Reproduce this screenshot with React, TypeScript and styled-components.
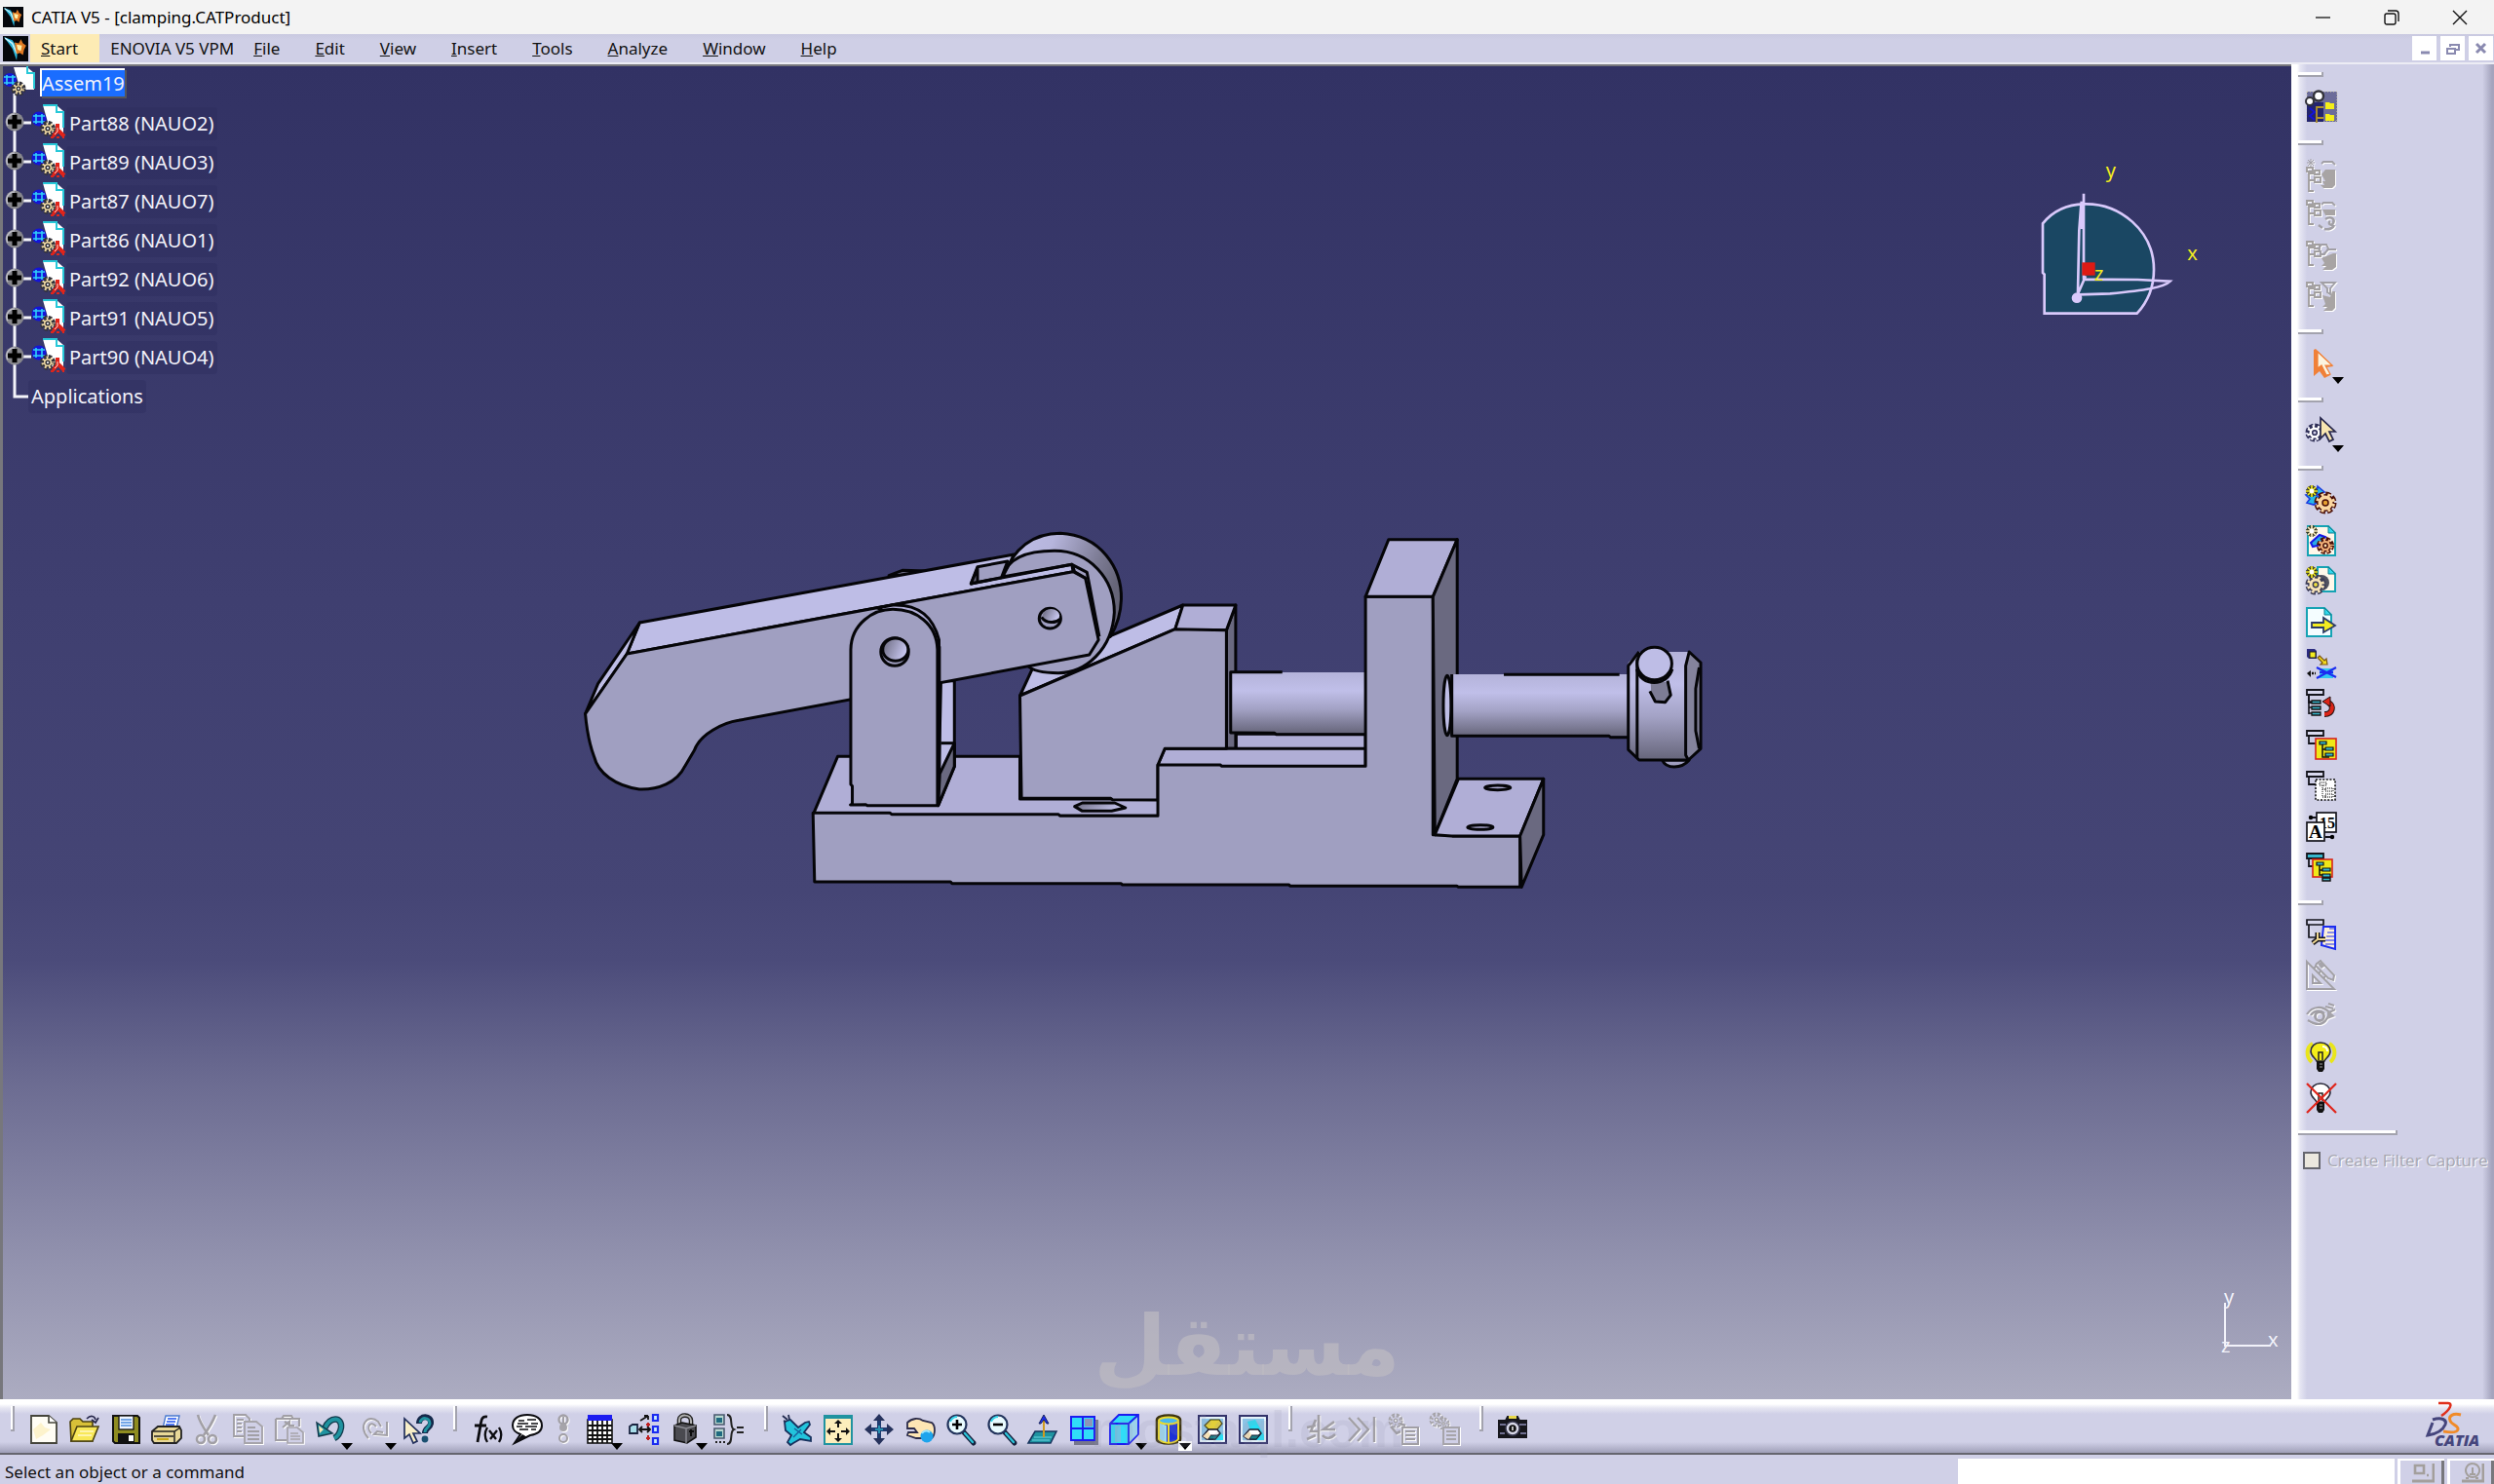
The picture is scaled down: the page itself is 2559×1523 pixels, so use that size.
import React from 'react';
import styled, { createGlobalStyle } from 'styled-components';

const INK = '#26264a';
const LILAC = '#d0d0e7';
const UI_FONT = '"Noto Sans", "Open Sans", sans-serif';

const GlobalStyle = createGlobalStyle`
  * { box-sizing: border-box; }
  body { margin: 0; background: ${LILAC}; font-family: ${UI_FONT}; color: #111; }
  button { font: inherit; color: inherit; border: 0; padding: 0; background: none; cursor: default; }
  svg { display: block; }
`;

/* ---------- window frame ---------- */

const Window = styled.div`
  position: relative;
  display: flex;
  flex-direction: column;
  height: 100vh;
  overflow: hidden;
`;

const TitleBar = styled.header`
  display: flex;
  align-items: center;
  height: 35px;
  padding-left: 3px;
  gap: 8px;
  background: #f3f3f3;
`;

const Title = styled.h1`
  flex: 1;
  margin: 0;
  font-size: 17px;
  line-height: 24px;
  font-weight: 400;
  color: #000;
`;

const FrameButtons = styled.div`
  display: flex;
`;

const FrameButton = styled.button`
  display: grid;
  place-items: center;
  width: 70px;
  height: 35px;
`;

const MenuBar = styled.nav`
  display: flex;
  align-items: stretch;
  height: 29px;
  background: linear-gradient(#c9c9e0, #cfcfe6 6px);
`;

const MenuIcon = styled.span`
  display: grid;
  place-items: center;
  width: 31px;
`;

const MenuItem = styled.button<{ $kind?: 'start' | 'wide' }>`
  padding: ${p => (p.$kind === 'start' ? '0 22px 0 11px' : p.$kind === 'wide' ? '0 2px 0 11px' : '0 18px')};
  background: ${p => (p.$kind === 'start' ? '#fdebb4' : 'none')};
  font-size: 17px;
  line-height: 28px;
  &::first-letter { text-decoration: ${p => (p.$kind === 'wide' ? 'none' : 'underline')}; }
`;

const Spacer = styled.div`
  flex: 1;
`;

const DocButtons = styled.div`
  display: flex;
  align-items: center;
  gap: 4px;
  padding-right: 1px;
`;

const DocButton = styled.button`
  display: grid;
  place-items: center;
  width: 25px;
  height: 25px;
  background: #fff;
`;

const Workspace = styled.div`
  display: flex;
  flex: 1;
  min-height: 0;
  border-top: 2px solid #ececf4;
`;

/* ---------- 3D view ---------- */

const Viewport = styled.main`
  position: relative;
  flex: 1;
  overflow: hidden;
  border-top: 2px solid #77777c;
  border-left: 3px solid #77777c;
  background: linear-gradient(#323264 0%, #3f3f70 40%, #454575 62%, #4b4b7a 67%, #6b6b91 76%, #9393af 90%, #acacc1 100%);
`;

const ModelView = styled.div`
  position: absolute;
  left: 577px;
  top: 452px;
`;

const CompassView = styled.div`
  position: absolute;
  right: 51px;
  top: 72px;
`;

const AxisView = styled.div`
  position: absolute;
  right: 1px;
  bottom: 26px;
`;

const Tree = styled.ul`
  list-style: none;
  margin: 0;
  padding: 0;
  width: 300px;
`;

const TreeRow = styled.li<{ $root?: boolean }>`
  display: flex;
  height: ${p => (p.$root ? 39 : 40)}px;
  align-items: flex-start;
`;

const TreeLabel = styled.button`
  height: 34px;
  margin-top: 3px;
  padding: 0 3px;
  border-radius: 4px;
  background: rgba(42, 42, 92, 0.35);
  color: #f2f2fa;
  font-size: 20px;
  line-height: 34px;
  white-space: nowrap;
`;

const RootLabel = styled.button`
  height: 29px;
  margin: 2px 0 0 4px;
  border: solid #fff;
  border-width: 2px 0 0 2px;
  box-shadow: 2px 2px 0 #55555a;
  background: #1a6dff;
  color: #f2f2fa;
  font-size: 20px;
  line-height: 28px;
`;

/* ---------- tool strips ---------- */

const Strip = styled.aside`
  width: 208px;
  padding: 8px 0 0 7px;
  background: linear-gradient(90deg, #fff 0 6px, #e6e6f3 9px, ${LILAC} 16px, ${LILAC} 196px, #a4a4bd 206px);
`;

const StripGroup = styled.div<{ $single?: boolean }>`
  min-height: ${p => (p.$single ? 70 : 0)}px;
  padding-bottom: 12px;
`;

const StripRule = styled.div<{ $long?: boolean }>`
  width: ${p => (p.$long ? 102 : 26)}px;
  height: 5px;
  margin-bottom: 9px;
  border: solid #a3a3ae;
  border-width: 0 2px 2px 0;
  background: #fff;
`;

const ToolButton = styled.button<{ $width?: number; $off?: boolean }>`
  position: relative;
  display: block;
  width: ${p => p.$width ?? 42}px;
  height: 42px;
  padding: 5px 0 5px ${p => (p.$width === 33 ? 0 : 5)}px;
  & > svg { filter: ${p => (p.$off ? 'drop-shadow(1px 1px 0 #fff)' : 'none')}; }
`;

const StripTool = styled(ToolButton)`
  margin-left: 3px;
`;

const DropArrow = styled.span<{ $lit?: boolean }>`
  position: absolute;
  left: 31px;
  top: 33px;
  display: grid;
  place-items: center;
  width: 14px;
  height: 10px;
  background: ${p => (p.$lit ? '#fff' : 'none')};
  &::after {
    content: '';
    border: solid transparent;
    border-width: 7px 6px 0;
    border-top-color: #000;
  }
`;

const CaptureRow = styled.label`
  display: flex;
  align-items: center;
  gap: 7px;
  margin-top: 14px;
  padding-left: 5px;
  color: #a6a6b0;
  text-shadow: 1px 1px 0 #fff;
  font-family: "Open Sans", sans-serif;
  font-size: 17px;
  line-height: 24px;
  white-space: nowrap;
`;

const Check = styled.input`
  appearance: none;
  width: 18px;
  height: 18px;
  margin: 0;
  border: 2px solid #66666f;
  background: #ebe7de;
`;

const BottomBar = styled.div`
  display: flex;
  align-items: flex-start;
  height: 57px;
  padding: 7px 8px 0 11px;
  border-bottom: 2px solid #66666f;
  background: linear-gradient(#fff 0 5px, #e6e6f2 9px, ${LILAC} 15px, ${LILAC} 44px, #9f9fb8 55px);
`;

const BarGroup = styled.div`
  display: flex;
  align-items: flex-start;
  padding-right: 15px;
`;

const Grip = styled.div`
  width: 4px;
  height: 26px;
  margin-right: 9px;
  border: solid #a3a3ae;
  border-width: 0 2px 2px 0;
  background: #fff;
`;

const BarTools = styled.div`
  display: flex;
  padding-top: 3px;
`;

const Brand = styled.div`
  margin-top: -5px;
`;

const StatusBar = styled.footer`
  display: flex;
  height: 30px;
  padding: 4px 0 0 5px;
  background: ${LILAC};
`;

const Message = styled.p`
  flex: 1;
  margin: 0;
  font-size: 17px;
  line-height: 28px;
`;

const CommandInput = styled.input`
  width: 448px;
  border: 0;
  padding: 0 6px;
  background: #fff;
  font: 400 17px ${UI_FONT};
`;

const StatusButton = styled.button`
  display: grid;
  place-items: center;
  width: 48px;
  margin-left: 3px;
  border: solid #fff;
  border-width: 2px 0 0 3px;
  box-shadow: inset -3px 0 0 #77777c;
`;

const Watermark = styled.div`
  position: absolute;
  left: 50%;
  bottom: 32px;
  transform: translateX(-50%);
  display: flex;
  flex-direction: column;
  align-items: center;
  pointer-events: none;
`;

const MarkArabic = styled.span`
  margin-bottom: 12px;
  font: 700 86px/100px "DejaVu Sans", sans-serif;
  color: rgba(190, 187, 194, 0.7);
`;

const MarkLatin = styled.span`
  font: 700 52px/48px "Liberation Sans", sans-serif;
  color: rgba(150, 150, 175, 0.16);
`;

/* ---------- icon pieces ---------- */

type GearProps = { x: number; y: number; r: number; fill?: string; line?: string; hub?: string };

const Gear = ({ x, y, r, fill = '#f8e0b0', line = '#2b2b2b', hub = '#fff' }: GearProps) => {
  const t = (2 * Math.PI * r) / 16;
  return (
    <g>
      <circle cx={x} cy={y} r={r} fill={line} stroke={line} strokeWidth={5} strokeDasharray={`${t * 1.4} ${t * 0.6}`} />
      <circle cx={x} cy={y} r={r - 1.5} fill={fill} />
      <circle cx={x} cy={y} r={r - 0.5} fill="none" stroke={fill} strokeWidth={3} strokeDasharray={`${t * 0.8} ${t * 1.14}`} strokeDashoffset={-t * 0.3} />
      <circle cx={x} cy={y} r={r / 3} fill={hub} stroke={line} strokeWidth={1.5} />
    </g>
  );
};

const Sun = ({ x, y, pale }: { x: number; y: number; pale?: boolean }) => {
  const d = `M${x} ${y - 6}v12M${x - 6} ${y}h12M${x - 4} ${y - 4}l8 8M${x + 4} ${y - 4}l-8 8`;
  return (
    <g>
      <path d={d} stroke="#33331a" strokeWidth={3.4} />
      <path d={d} stroke={pale ? '#fdeec0' : '#f4ec20'} strokeWidth={1.7} />
      <circle cx={x} cy={y} r={2.4} fill="#fff" />
    </g>
  );
};

const Sheet = ({ x = 2, y = 1, w = 28, h = 30, fill = '#fff8ea' }) => (
  <g>
    <path d={`M${x} ${y}h${w - 7}l7 7v${h - 7}h${-w}z`} fill={fill} stroke="#16a3b4" strokeWidth={2} />
    <path d={`M${x + w - 7} ${y}v7h7z`} fill="#30d8ec" stroke="#0d7f90" strokeWidth={1} />
  </g>
);

const Head = ({ fill = '#d9d9ee' }: { fill?: string }) => (
  <g fill="none" stroke="#15151c" strokeWidth={1.8}>
    <path d="M3 6v8h8" />
    <path d="M1 1h17v5H1z" fill={fill} />
  </g>
);

const GrayTree = ({ top = 6 }: { top?: number }) => (
  <path
    d={`M1 ${top}h6v4H1zM3 ${top + 4}v20h5M3 ${top + 6}h5M9 ${top + 3}h5v4H9zM3 ${top + 13}h5M9 ${top + 10}h6v5H9z`}
    fill="none"
    stroke="#a29f9f"
    strokeWidth={1.9}
  />
);

const Cubes = ({ gold }: { gold?: boolean }) => (
  <g>
    <rect x={2} y={2} width={28} height={28} fill="#8cc4e6" stroke="#33336a" strokeWidth={2} />
    <rect x={4} y={4} width={24} height={24} fill="none" stroke="#fff" strokeWidth={1.5} />
    <path d={gold ? 'M20 14l7 8v5h-9z' : 'M10 8l8-2 9 16v5H16z'} fill="#25dff5" />
    {gold && <path d="M8 12l6-6h9l3 4-5 6h-9z" fill="#e2cf3a" stroke="#3f3d10" strokeWidth={1.2} />}
    <path d="M6 23l6-7h9l3 4-5 6H10z" fill="#fff" stroke="#1b1b2c" strokeWidth={1.4} />
    <path d="M14 22h7l3-2-5 6h-7z" fill="#1d7f86" stroke="#1b1b2c" strokeWidth={1} />
    <path d="M6 23l6-5 2 4-3 4z" fill="#f6e2b6" />
  </g>
);

const Bulb = ({ lit }: { lit?: boolean }) => (
  <g>
    {lit && <path d="M7 2C0 6 0 16 6 21M24 2c7 4 7 14 1 19" fill="none" stroke="#e9e51b" strokeWidth={4} />}
    <path d="M15 1c-6 0-10 4-10 9 0 5 5 7 6 10h8c1-3 6-5 6-10 0-5-4-9-10-9z" fill={lit ? '#f4ee18' : '#fff'} stroke="#2a2a3a" strokeWidth={1.6} />
    <path d="M13 19v-8h4v8" fill="none" stroke="#222" strokeWidth={1.5} />
    <path d="M17 5c3 0 5 2 5 5" fill="none" stroke="#fff" strokeWidth={2} />
    <path d="M11 20h8v8l-2 3h-4l-2-3z" fill="#111" />
    <path d="M14 23h3M14 26h3" stroke="#999" strokeWidth={1} />
  </g>
);

const YellowTree = ({ x, y, w, h }: { x: number; y: number; w: number; h: number }) => (
  <g>
    <rect x={x} y={y} width={w} height={h} fill="#f0e818" stroke="#d8231c" strokeWidth={1.6} />
    <path d={`M${x + 7} ${y + 5}v${h - 7}h7M${x + 7} ${y + 11}h7`} fill="none" stroke="#111" strokeWidth={1.5} />
    <path d={`M${x + 4} ${y + 3}h7v3h-7zM${x + 10} ${y + 9}h8v3h-8zM${x + 10} ${y + 15}h8v3h-8z`} fill="#36b6cc" stroke="#111" strokeWidth={1.2} />
  </g>
);

const Lens = ({ plus }: { plus?: boolean }) => (
  <g>
    <path d="M19 19l10 11" stroke="#15203c" strokeWidth={5} strokeLinecap="round" />
    <path d="M20 20l8 9" stroke="#2cc6da" strokeWidth={2.4} strokeLinecap="round" />
    <circle cx={12} cy={11} r={9.5} fill="#e8fbff" stroke="#22345c" strokeWidth={2.2} />
    <path d="M5 8a8 8 0 0 1 7-5" fill="none" stroke="#35d5ea" strokeWidth={2} />
    <path d={plus ? 'M7 11h10M12 6v10' : 'M7 11h10'} stroke="#000" strokeWidth={2.6} />
  </g>
);

const grayProps = { fill: 'none', stroke: '#a19fa5', strokeWidth: 1.9 };

const ICONS: Record<string, React.ReactNode> = {
  filters: (
    <g>
      <rect x={1} y={1} width={31} height={31} fill="#6c6c9a" stroke="#d8d2a8" strokeWidth={1} strokeDasharray="1 2" />
      <path d="M1 12h17v20H1z" fill="#23246e" />
      <path d="M4 18l5 4-5 4 5 4" stroke="#1414d8" strokeWidth={2} fill="none" />
      <path d="M11 33V17h7M11 28h7" stroke="#b0922a" strokeWidth={1.8} fill="none" />
      <path d="M20 12h4l1 1h4v6h-9zM20 24h4l1 1h4v6h-9z" fill="#f4ee18" />
      <circle cx={13} cy={5.5} r={5} fill="#fff" stroke="#33333a" strokeWidth={2.4} />
      <circle cx={4} cy={11} r={4} fill="#fff" stroke="#33333a" strokeWidth={2} />
    </g>
  ),
  dbNew: (
    <g>
      <GrayTree top={9} />
      <path d="M5 0v8M1 4h8M2 1l6 6M8 1L2 7" {...grayProps} strokeWidth={1} />
      <path d="M16 5l2-2h9l3 3" {...grayProps} />
      <path d="M16 16l4-5h10v16l-3 3h-9l-3-3h4l-2-4h3z" fill="#a8a4a4" />
    </g>
  ),
  dbRefresh: (
    <g>
      <GrayTree top={1} />
      <path d="M16 5l2-2h9l3 3" {...grayProps} />
      <path d="M17 10h13v6H20z" fill="#a8a4a4" />
      <path d="M13 26l4 3M20 20c6-4 10 0 8 4s-6 0-3-2M19 30c5 1 9-1 10-4" {...grayProps} strokeWidth={2.6} />
    </g>
  ),
  dbBox: (
    <g>
      <GrayTree top={1} />
      <path d="M13 8l3-4h5l2 4-4 6h-3zM18 14l5-5h8" {...grayProps} />
      <path d="M16 18l12-5h3v14l-4 3H17l4-4h-5l3-3z" fill="#a8a4a4" />
    </g>
  ),
  dbFilter: (
    <g>
      <GrayTree top={1} />
      <path d="M16 1h14l-5 6v6l-3-2V7z" {...grayProps} />
      <path d="M17 14l8 2 2-6h3v17l-3 3h-9l4-4h-5l3-3z" fill="#a8a4a4" />
    </g>
  ),
  select: (
    <g>
      <path d="M8 2l2-1 18 18-7 1 4 8-6 3-5-7-6 5z" fill="#f08038" />
      <path d="M12 4v17l4-3 5 10 4-1-5-9h7z" fill="#fbf4e0" stroke="#f08038" strokeWidth={1.2} />
    </g>
  ),
  gearSelect: (
    <g>
      <Gear x={9} y={17} r={7} fill="#fff" line="#2c2c55" hub={LILAC} />
      <path d="M15 2v21l5-5 4 8 4-2-4-8h6z" fill="#f8e6b0" stroke={INK} strokeWidth={1.7} />
    </g>
  ),
  partGears: (
    <g>
      <path d="M0 11l8-2 8 6-8 6-7-2 3-4zM12 2l7 6-8 3z" fill="#27b9e8" stroke="#1a3be0" strokeWidth={1.6} />
      <Sun x={6} y={7} />
      <Gear x={20} y={19} r={9} fill="#fbd6a0" line="#4a0f08" hub="#e6a030" />
    </g>
  ),
  newProduct: (
    <g>
      <Sheet />
      <path d="M5 18l9-8 6 2-4 8-9 2z" fill="#27a9e8" stroke="#1616e8" strokeWidth={2} />
      <Gear x={20} y={21} r={6.5} fill="#f3b27a" line="#4a0f08" hub="#f8e0b0" />
      <Sun x={6} y={6} pale />
    </g>
  ),
  newPart: (
    <g>
      <Sheet x={12} y={1} w={18} h={25} />
      <circle cx={16} cy={17} r={8} fill="#51515f" />
      <Gear x={10} y={19} r={8} fill="#f8e4b8" line="#3b3b55" hub="#f0e040" />
      <Sun x={6} y={6} />
    </g>
  ),
  existing: (
    <g>
      <Sheet x={1} y={1} w={25} h={29} fill="#f4fdff" />
      <path d="M6 16h12v-5l12 8-12 7v-5H6z" fill="#f4ec20" stroke="#2c3a66" strokeWidth={1.8} />
    </g>
  ),
  replace: (
    <g>
      <path d="M1 1h8l2 2v8H3L1 9z" fill="#2b2b80" />
      <rect x={4} y={4} width={6} height={6} fill="#f4ec20" stroke="#222" />
      <path d="M14 8l5 5 2-2 1 6h-7l2-2-5-5z" fill="#f4dc20" stroke="#7a5510" strokeWidth={1.2} />
      <path d="M14 21h14v10H14z" fill="#30c8f0" />
      <path d="M11 20l20 10M31 20L11 31M14 25h14" stroke="#1c2cf0" strokeWidth={2.2} />
      <path d="M5 23v7l-4-4z" fill="#111" />
      <path d="M6 26h2M9 26h1" stroke="#111" strokeWidth={2.4} />
    </g>
  ),
  reorder: (
    <g>
      <Head />
      <path d="M3 6v20M3 13h4M3 19h4M3 25h4" stroke="#15151c" strokeWidth={1.6} />
      <path d="M6 12h9v3H6zM6 18h9v3H6zM6 24h9v3H6z" fill="#36b6cc" stroke="#111" strokeWidth={1.3} />
      <path d="M19 26c9 0 10-9 4-12" fill="none" stroke="#201010" strokeWidth={6} />
      <path d="M19 26c9 0 10-9 4-12" fill="none" stroke="#dc2418" strokeWidth={4} />
      <path d="M17 13l8-5v10z" fill="#dc2418" stroke="#201010" strokeWidth={1} />
    </g>
  ),
  numbering: (
    <g>
      <Head />
      <YellowTree x={10} y={9} w={21} h={21} />
    </g>
  ),
  ghostTree: (
    <g>
      <Head />
      <rect x={10} y={9} width={20} height={21} fill="#fff" stroke="#111" strokeWidth={1.6} strokeDasharray="2 1.6" />
      <path d="M14 12h7v3h-7zM17 15v12h3M17 19h3M20 18h8v3h-8zM20 24h8v3h-8z" fill="none" stroke="#444" strokeWidth={1.3} strokeDasharray="1 1" />
    </g>
  ),
  letters: (
    <g>
      <rect x={11} y={1} width={20} height={20} fill="#fff" stroke="#15151c" strokeWidth={1.7} />
      <text x={14} y={17} fontFamily="Liberation Serif, serif" fontWeight={700} fontSize={16}>15</text>
      <rect x={1} y={11} width={18} height={19} fill="#fff" stroke="#15151c" strokeWidth={1.7} />
      <text x={3} y={27} fontFamily="Liberation Serif, serif" fontWeight={700} fontSize={19}>A</text>
      <path d="M3 6h8M20 26h8" stroke="#15151c" strokeWidth={1.8} />
      <circle cx={5} cy={6} r={2.2} />
      <circle cx={27} cy={26} r={2.2} />
    </g>
  ),
  subTree: (
    <g>
      <Head fill="#36b6cc" />
      <YellowTree x={7} y={7} w={20} h={18} />
      <path d="M17 26h8v3h-8z" fill="#36b6cc" stroke="#111" strokeWidth={1.4} />
    </g>
  ),
  sceneTree: (
    <g>
      <path d="M1 1h17v5H1zM3 6v13h8" fill="#d9d9ee" stroke="#15151c" strokeWidth={1.7} />
      <path d="M18 8h12v23l-14-4z" fill="#fdf0d8" stroke="#1c2cf0" strokeWidth={2} />
      <path d="M24 10h6M22 14h8M21 18h9M20 22h10M20 26h10" stroke="#1c2cf0" strokeWidth={1.2} />
      <path d="M12 14v7l-5 4M13 21h7" stroke="#15151c" strokeWidth={5} fill="none" />
      <path d="M12 14v7l-5 4M13 21h7" stroke="#f0d890" strokeWidth={2} fill="none" />
    </g>
  ),
  measure: (
    <g>
      <path d="M1 2v28h28zM7 16v8h8z" {...grayProps} strokeWidth={2} />
      <path d="M8 9l2-2M13 14l2-2M18 19l2-2" {...grayProps} />
      <path d="M11 4l4-3 14 15-1 5-5-2L10 6z" {...grayProps} strokeWidth={2} />
      <path d="M12 4l4-2 4 4-4 3z" fill="#a6a4aa" />
    </g>
  ),
  eye: (
    <g>
      <path d="M1 14C7 5 17 5 24 12l6-3M20 6l8 2M23 3l6 2M24 12c-1 7-6 12-11 12-5 0-8-2-11-4M5 15c3-5 10-6 14-2" {...grayProps} strokeWidth={2.2} />
      <path d="M22 9l8 7-8 3z" fill="#a6a4aa" />
      <circle cx={14} cy={16} r={4.5} {...grayProps} strokeWidth={2.8} />
    </g>
  ),
  bulbOn: <Bulb lit />,
  bulbOff: (
    <g>
      <Bulb />
      <path d="M1 1l30 30M31 1L1 31" stroke="#e0241a" strokeWidth={2.2} />
    </g>
  ),
  file: (
    <g>
      <path d="M3 2h18l8 7v21H3z" fill="#fffdf4" stroke="#44443a" strokeWidth={1.8} />
      <path d="M21 2v7h8" fill="#fff" stroke="#44443a" strokeWidth={1.6} />
      <path d="M5 16l8-7 4 5 6 2-8 6-7 4z" fill="#fdf3cc" />
    </g>
  ),
  open: (
    <g>
      <path d="M1 8l3-3h7l3 3h10v20H2z" fill="#d8c038" stroke="#4a4010" strokeWidth={1.6} />
      <path d="M8 13h22l-6 15H2z" fill="#f8e858" stroke="#4a4010" strokeWidth={1.6} />
      <path d="M11 18h14M9 22h14" stroke="#fff8c8" strokeWidth={1.5} />
      <path d="M18 5c4-4 8-3 9 1m3-2l-3 5-4-3" fill="none" stroke="#26264a" strokeWidth={1.7} />
    </g>
  ),
  save: (
    <g>
      <path d="M3 2h25l2 2v26H5l-2-2z" fill="#8f8c20" stroke="#111" strokeWidth={2} />
      <rect x={9} y={2} width={15} height={14} fill="#f0f6ff" stroke="#111" strokeWidth={1.3} />
      <path d="M11 6h11M11 9h11M11 12h11" stroke="#4a8ce0" strokeWidth={1.3} />
      <path d="M8 20h17v10H8z" fill="#111" />
      <path d="M19 22h5v6h-5z" fill="#fff" />
    </g>
  ),
  print: (
    <g>
      <path d="M12 15l3-13h14l-3 13z" fill="#fff" stroke="#4a7ad0" strokeWidth={1.4} />
      <path d="M17 5h9M16 8h9M15 11h9" stroke="#1c50f0" strokeWidth={1.5} />
      <path d="M1 18l6-5h22l2 4v8l-5 5H3l-2-3z" fill="#e8d898" stroke="#222" strokeWidth={1.8} />
      <path d="M1 18h23l6-4M24 18v11M3 23h20" fill="none" stroke="#222" strokeWidth={1.5} />
      <path d="M6 26h12" stroke="#c8a818" strokeWidth={2} />
    </g>
  ),
  cut: (
    <g>
      <path d="M6 1c2 8 5 12 11 21M24 1c-3 8-6 13-12 21" {...grayProps} strokeWidth={2.6} />
      <circle cx={9} cy={26} r={4} {...grayProps} strokeWidth={2.6} />
      <circle cx={21} cy={26} r={4} {...grayProps} strokeWidth={2.6} />
    </g>
  ),
  copy: (
    <g>
      <path d="M1 1h12l4 4v18H1zM4 6h7M4 10h5M4 14h5M4 18h5" {...grayProps} />
      <path d="M12 8h12l6 5v17H12z" fill={LILAC} stroke="#a6a4aa" strokeWidth={1.9} />
      <path d="M15 14h8M15 18h12M15 22h12M15 26h12" {...grayProps} />
    </g>
  ),
  paste: (
    <g>
      <path d="M2 5h6l2-3h8l2 3h6v8M2 5v22h11M8 5h12M17 12l-6-4" {...grayProps} strokeWidth={2.2} />
      <path d="M9 14l7-6v4h5" {...grayProps} strokeWidth={2} />
      <path d="M14 14h10l6 5v11H14zM17 20h8M17 23h10M17 26h10" fill={LILAC} stroke="#a6a4aa" strokeWidth={1.7} />
    </g>
  ),
  undo: (
    <g>
      <path d="M10 15c6-13 18-12 17-1-1 6-3 9-7 11" fill="none" stroke="#123a4c" strokeWidth={6.5} />
      <path d="M10 15c6-13 18-12 17-1-1 6-3 9-7 11" fill="none" stroke="#1f93a0" strokeWidth={4} />
      <path d="M2 9l2 14 14-3z" fill="#1f93a0" stroke="#123a4c" strokeWidth={1.5} />
      <path d="M4 12l1 8 4-4z" fill="#f4e8b8" />
    </g>
  ),
  redo: (
    <g>
      <path d="M10 25C-2 12 10-1 20 8l3 5M13 20C7 14 12 6 18 13M29 8v14l-13-1 3-3 6 1" {...grayProps} strokeWidth={2} />
    </g>
  ),
  help: (
    <g>
      <path d="M2 5v20l5-4 4 9 4-2-4-8h7z" fill="#f8eec8" stroke="#22305c" strokeWidth={1.7} />
      <path d="M17 10c0-9 13-9 12 0-1 5-6 4-6 10" fill="none" stroke="#14284a" strokeWidth={6} />
      <path d="M18 9c1-6 10-6 10 1-1 5-5 4-5 9" fill="none" stroke="#1f93a0" strokeWidth={3} />
      <circle cx={23} cy={26} r={3.4} fill="#1a5070" />
    </g>
  ),
  fx: (
    <g>
      <path d="M17 3c-5-1-6 2-7 9L7 29M4 12h12" fill="none" stroke="#0c0c10" strokeWidth={2.8} />
      <path d="M17 14c-3 5-3 10 0 15M29 14c3 5 3 10 0 15M19 17l7 9M27 17l-7 9" fill="none" stroke="#0c0c10" strokeWidth={2.3} />
    </g>
  ),
  comment: (
    <g>
      <path d="M16 1c9 0 15 4 15 11 0 6-5 9-12 10L3 30l6-9C4 19 1 17 1 12 1 5 7 1 16 1z" fill="#fff" stroke="#0c0c10" strokeWidth={2} />
      <path d="M2 31l9-10 5 3z" fill="#0c0c10" />
      <path d="M7 7h6M16 6h9M6 10h11M20 10h7M5 13h6M14 13h12M8 16h9M20 16h5" stroke="#0c0c10" strokeWidth={1.5} />
    </g>
  ),
  linkOff: (
    <g>
      <circle cx={16} cy={6} r={4.5} {...grayProps} strokeWidth={2.4} />
      <path d="M16 3v12" {...grayProps} strokeWidth={2} />
      <circle cx={16} cy={14} r={4} fill="#a6a4aa" />
      <circle cx={16} cy={25} r={4} {...grayProps} strokeWidth={2} />
    </g>
  ),
  table: (
    <g>
      <rect x={3} y={6} width={25} height={24} fill="#fff" stroke="#111" strokeWidth={1.6} />
      <rect x={3} y={1} width={25} height={6} fill="#1c1cf0" />
      <path d="M3 12h25M3 17h25M3 22h25M3 26h25M8 7v23M13 7v23M18 7v23M23 7v23" stroke="#111" strokeWidth={1.8} />
    </g>
  ),
  relations: (
    <g>
      <path d="M1 13l3-2h5v9H1z" fill="#a8dce8" stroke="#1a2440" strokeWidth={1.8} />
      <path d="M11 16h11M14 13l-3 3 3 3M19 13l3 3-3 3M12 7l8-5M20 2h-4M20 2v4" fill="none" stroke="#111" strokeWidth={1.8} />
      <path d="M25 1h5v6h-5zM25 13h5v6h-5zM25 25h5v6h-5z" fill="#c8ecff" stroke="#1c2cf0" strokeWidth={2.2} />
      <path d="M20 9v4M20 22v5M18 11h4M18 25h4" stroke="#c02020" strokeWidth={2} />
    </g>
  ),
  lock: (
    <g>
      <path d="M10 12V6c0-6 12-6 12 1v5" fill="none" stroke="#222" strokeWidth={4.6} />
      <path d="M10 12V6c0-6 12-6 12 1v5" fill="none" stroke="#b0b0b0" strokeWidth={2} />
      <path d="M5 12l8-3 14 3v12l-9 6-13-3z" fill="#4a4a50" stroke="#111" strokeWidth={1.6} />
      <path d="M5 12l12 3 10-3M17 15v15" fill="none" stroke="#8c8c94" strokeWidth={1.4} />
      <path d="M20 18h5M22 16v7" stroke="#0c0c0c" strokeWidth={2} />
    </g>
  ),
  constraint: (
    <g>
      <path d="M1 1h10v10H1zM1 15h10v10H1z" fill="#b8d8d0" stroke="#4a5a70" strokeWidth={1.6} />
      <path d="M3 4h6v5H3zM3 18h6v5H3z" fill="#1f6a80" />
      <path d="M2 29h2M6 29h2M10 29h2" stroke="#222" strokeWidth={2} />
      <path d="M14 1c7 0 2 13 7 15-5 2 0 15-7 15" fill="none" stroke="#222" strokeWidth={2} />
      <path d="M24 14h7M24 19h7" stroke="#222" strokeWidth={1.8} />
    </g>
  ),
  fly: (
    <g>
      <path d="M3 8l6-2 8 8 7-5 4-1 1 3-6 8 7 5v4l-11-2-7 4-3 2-3-3 4-7-6-5z" fill="#22c4dc" stroke="#17305c" strokeWidth={1.8} />
      <path d="M1 2l5 4M7 1l1 5M2 7l3 1" stroke="#222c50" strokeWidth={1.8} />
      <path d="M13 15l8 6M20 16l-8 8" stroke="#17609c" strokeWidth={1.4} />
    </g>
  ),
  fit: (
    <g>
      <rect x={2} y={2} width={28} height={29} fill="#fdeebc" stroke="#1f93a0" strokeWidth={2} />
      <rect x={1} y={1} width={30} height={4} fill="#1f93a0" />
      <path d="M16 7v7M16 20v7M5 18h8M19 18h8" stroke="#111" strokeWidth={2} />
      <path d="M12 10l4-4 4 4zM12 25l4 4 4-4zM8 14l-4 4 4 4zM24 14l4 4-4 4z" fill="#111" />
    </g>
  ),
  pan: (
    <g>
      <path d="M16 4v24M4 16h24" stroke="#1f3c70" strokeWidth={4} />
      <path d="M16 0l6 7H10zM16 32l6-7H10zM1 16l7-6v12zM31 16l-7-6v12z" fill="#26325c" />
      <path d="M16 12v8M12 16h8" stroke="#2890b0" strokeWidth={2} />
    </g>
  ),
  rotate: (
    <g>
      <path d="M3 9c5-5 12-5 16-2l9 2c4 3 4 12 0 16H12l-9-3 1-3h9l-3-4H3z" fill="#fde6b4" stroke="#2c2c4a" strokeWidth={1.8} />
      <circle cx={23} cy={23} r={6.5} fill="#1da4ec" />
      <path d="M18 20c2-3 6-3 8-1" fill="none" stroke="#a0e8ff" strokeWidth={2} />
    </g>
  ),
  zoomIn: <Lens plus />,
  zoomOut: <Lens />,
  normal: (
    <g>
      <path d="M1 30l7-12h22l-6 12z" fill="#1f93a0" stroke="#16335c" strokeWidth={1.5} />
      <path d="M7 24h18M5 27h18" stroke="#6cd8e4" strokeWidth={1} />
      <path d="M17 6v18" stroke="#d09a20" strokeWidth={2} />
      <path d="M17 1l-5 9h2l3-4 3 4h2z" fill="#1c2cf0" stroke="#16225c" strokeWidth={1} />
    </g>
  ),
  views: (
    <g>
      <rect x={6} y={6} width={25} height={26} fill="#77778c" />
      <path d="M3 3h24v24H3z" fill="#30dcf8" stroke="#1c1cf0" strokeWidth={2} />
      <path d="M15 3v24M3 15h24" stroke="#1c1cf0" strokeWidth={2} />
      <path d="M17 5h8v8h-8z" fill="#8c94b8" />
    </g>
  ),
  cube: (
    <g>
      <path d="M1 10l9-9h20v20l-10 10H1z" fill="#30dcf8" stroke="#1c1cf0" strokeWidth={1.8} />
      <path d="M21 11l8-8v18l-8 8z" fill="#9cd0ea" />
      <path d="M1 10h19l10-9M20 10v21" fill="none" stroke="#1c1cf0" strokeWidth={1.8} />
      <path d="M6 12h6v17H6z" fill="#6cc4e4" />
    </g>
  ),
  shading: (
    <g>
      <path d="M4 6c0-6 24-6 24 0v20c0 6-24 6-24 0z" fill="#1c30d8" stroke="#3c3410" strokeWidth={2.6} />
      <path d="M6 9v17c1 3 7 4 8 4V12z" fill="#9cd8f0" />
      <ellipse cx={16} cy={7} rx={10} ry={3.6} fill="#48b8f0" stroke="#f0dc28" strokeWidth={2} />
      <path d="M6 8v18c4 5 16 5 20 0V8M16 11v18" fill="none" stroke="#f0dc28" strokeWidth={2} />
    </g>
  ),
  hideShow: <Cubes gold />,
  swapSpace: <Cubes />,
  break1: (
    <g {...grayProps}>
      <path d="M1 14l9-2M1 26l9-4M10 6L5 18h8M13 1v29M29 8L18 16h12M17 22c4 5 9 3 13-1" strokeWidth={2.6} />
    </g>
  ),
  break2: (
    <g {...grayProps}>
      <path d="M2 4l11 12L2 28M11 4l11 12-11 12M28 3v26" strokeWidth={2.4} />
    </g>
  ),
  gearDoc1: (
    <g>
      <Gear x={8} y={7} r={5} fill={LILAC} line="#a6a4aa" />
      <path d="M3 13l6 7 4-2M12 10l6 2" {...grayProps} strokeWidth={2.6} />
      <path d="M15 14h16v17H15zM18 18h10M18 22h10M18 26h10" {...grayProps} strokeWidth={2} />
    </g>
  ),
  gearDoc2: (
    <g>
      <Gear x={8} y={6} r={5} fill={LILAC} line="#a6a4aa" />
      <Gear x={15} y={10} r={4} fill={LILAC} line="#a6a4aa" />
      <path d="M15 14h16v17H15zM18 18h10M18 22h10M18 26h10" fill={LILAC} stroke="#a6a4aa" strokeWidth={2} />
    </g>
  ),
  camera: (
    <g>
      <path d="M2 7h7l2-4h10l2 4h7v17H2z" fill="#16161c" stroke="#16161c" strokeWidth={2} />
      <path d="M12 2h8v3h-8z" fill="#e8d84a" />
      <path d="M3 11h6M23 11h7M3 20h5M24 20h6" stroke="#6f6f90" strokeWidth={2} />
      <circle cx={16} cy={15} r={7} fill="#d8d8e8" stroke="#3a3a50" strokeWidth={1.5} />
      <circle cx={16} cy={15} r={3.8} fill="#111" />
      <path d="M16 13v4" stroke="#fff" strokeWidth={1.4} />
    </g>
  ),
};

const Icon = ({ name, size = 32 }: { name: string; size?: number }) => (
  <svg width={size} height={size} viewBox="0 0 32 32" overflow="visible" aria-hidden="true">
    {ICONS[name]}
  </svg>
);

const AppIcon = ({ size }: { size: number }) => (
  <svg width={size} height={size} viewBox="0 0 24 24" aria-hidden="true">
    <rect width={24} height={24} fill="#05070c" />
    <path d="M1 1l8 3 5 8-1 11-4-11z" fill="#28b4d8" />
    <path d="M2 2l7 5 4 9" fill="none" stroke="#c8f4ff" strokeWidth={1.4} />
    <path d="M11 6l4 1 2-4 2 4 3 2-2 4-1 5-3-2-3 1-1-5z" fill="#e07a24" />
    <path d="M13 8l5 1-1 5-3-1z" fill="#fdf0a8" />
  </svg>
);

/* ---------- data ---------- */

type Tool = { icon: string; label: string; off?: boolean; drop?: boolean; lit?: boolean; narrow?: boolean };

const SIDE: Tool[][] = [
  [{ icon: 'filters', label: 'Filters' }],
  [
    { icon: 'dbNew', label: 'New capture', off: true },
    { icon: 'dbRefresh', label: 'Refresh capture', off: true },
    { icon: 'dbBox', label: 'Capture box', off: true },
    { icon: 'dbFilter', label: 'Capture filter', off: true },
  ],
  [{ icon: 'select', label: 'Select', drop: true }],
  [{ icon: 'gearSelect', label: 'Product selection', drop: true }],
  [
    { icon: 'partGears', label: 'Component' },
    { icon: 'newProduct', label: 'Product' },
    { icon: 'newPart', label: 'Part' },
    { icon: 'existing', label: 'Existing component' },
    { icon: 'replace', label: 'Replace component' },
    { icon: 'reorder', label: 'Graph tree reordering' },
    { icon: 'numbering', label: 'Product load' },
    { icon: 'ghostTree', label: 'Product unload' },
    { icon: 'letters', label: 'Generate numbering' },
    { icon: 'subTree', label: 'Selective load' },
  ],
  [
    { icon: 'sceneTree', label: 'Manage representations' },
    { icon: 'measure', label: 'Measure', off: true },
    { icon: 'eye', label: 'View', off: true },
    { icon: 'bulbOn', label: 'Activate' },
    { icon: 'bulbOff', label: 'Deactivate' },
  ],
];

const BAR: Tool[][] = [
  [
    { icon: 'file', label: 'New' },
    { icon: 'open', label: 'Open' },
    { icon: 'save', label: 'Save' },
    { icon: 'print', label: 'Print' },
    { icon: 'cut', label: 'Cut', off: true },
    { icon: 'copy', label: 'Copy', off: true },
    { icon: 'paste', label: 'Paste', off: true },
    { icon: 'undo', label: 'Undo', drop: true },
    { icon: 'redo', label: 'Redo', off: true, drop: true },
    { icon: 'help', label: 'What is this' },
  ],
  [
    { icon: 'fx', label: 'Formula' },
    { icon: 'comment', label: 'Comment' },
    { icon: 'linkOff', label: 'Link', off: true, narrow: true },
    { icon: 'table', label: 'Design table', drop: true },
    { icon: 'relations', label: 'Relations' },
    { icon: 'lock', label: 'Lock', drop: true },
    { icon: 'constraint', label: 'Equivalent dimensions' },
  ],
  [
    { icon: 'fly', label: 'Fly mode' },
    { icon: 'fit', label: 'Fit all in' },
    { icon: 'pan', label: 'Pan' },
    { icon: 'rotate', label: 'Rotate' },
    { icon: 'zoomIn', label: 'Zoom in' },
    { icon: 'zoomOut', label: 'Zoom out' },
    { icon: 'normal', label: 'Normal view' },
    { icon: 'views', label: 'Multi-view' },
    { icon: 'cube', label: 'Quick view', drop: true },
    { icon: 'shading', label: 'Shading', drop: true, lit: true },
    { icon: 'hideShow', label: 'Hide or show' },
    { icon: 'swapSpace', label: 'Swap visible space' },
  ],
  [
    { icon: 'break1', label: 'Symmetry', off: true },
    { icon: 'break2', label: 'Forward', off: true },
    { icon: 'gearDoc1', label: 'Part list', off: true },
    { icon: 'gearDoc2', label: 'Product list', off: true },
  ],
  [{ icon: 'camera', label: 'Capture' }],
];

const MENUS = ['File', 'Edit', 'View', 'Insert', 'Tools', 'Analyze', 'Window', 'Help'];

const PARTS = [
  'Part88 (NAUO2)',
  'Part89 (NAUO3)',
  'Part87 (NAUO7)',
  'Part86 (NAUO1)',
  'Part92 (NAUO6)',
  'Part91 (NAUO5)',
  'Part90 (NAUO4)',
];

/* ---------- tree drawings ---------- */

const RootIcon = () => (
  <svg width={34} height={39} viewBox="0 0 34 39" aria-hidden="true">
    <path d="M12 28v11" stroke="#f4f4fa" strokeWidth={3} />
    <path d="M11 1h14l7 6v17H18z" fill="#fff" />
    <path d="M25 0v7h7v16" fill="none" stroke="#28c8d8" strokeWidth={2} />
    <circle cx={7} cy={14} r={7} fill="#1414d8" />
    <path d="M4 9v10M10 9v10M1 11h12M1 17h12" stroke="#30d0f8" strokeWidth={1.6} />
    <Gear x={16} y={23} r={5} fill="#f3dca6" line="#33333a" />
  </svg>
);

const PartIcon = () => (
  <svg width={36} height={36} viewBox="0 0 36 36" aria-hidden="true">
    <path d="M12 1h14l7 6v22H20z" fill="#fff" />
    <path d="M12 1h14v7h7v16" fill="none" stroke="#28c8d8" strokeWidth={2} />
    <circle cx={8} cy={15} r={7.5} fill="#1414d8" />
    <path d="M5 10v10M11 10v10M2 12h12M2 18h12" stroke="#30d0f8" strokeWidth={1.6} />
    <path d="M27 20v7l-5 6M28 27l6 6" stroke="#e0241a" strokeWidth={4} fill="none" />
    <path d="M20 34h14" stroke="#e0241a" strokeWidth={2} strokeDasharray="3 3" />
    <Gear x={17} y={25} r={5.5} fill="#f3dca6" line="#33333a" />
    <path d="M27 24v4l-3 3" stroke="#fbd8d0" strokeWidth={1} fill="none" />
  </svg>
);

const Branch = ({ last }: { last?: boolean }) => {
  const width = last ? 26 : 29;
  return (
    <svg width={width} height={40} viewBox={`0 0 ${width} 40`} aria-hidden="true">
      <path d={last ? 'M12 0v20h15' : 'M12 0v40M21 19h8'} stroke="#f4f4fa" strokeWidth={3} fill="none" />
      {!last && (
        <g>
          <circle cx={12} cy={18} r={9.5} fill="#86868c" />
          <path d="M12 10a8 8 0 0 0-7 12" fill="none" stroke="#bdbdc6" strokeWidth={1.6} />
          <path d="M12 11v14M5 18h14" stroke="#000" strokeWidth={5} />
        </g>
      )}
    </svg>
  );
};

/* ---------- scene drawings ---------- */

const FACE = '#a09fc1';
const TOP = '#b0aed6';
const SLOPE = '#bebde6';
const SIDE_FACE = '#6a6980';

const Shape = styled.path`
  stroke: #050508;
  stroke-width: 3px;
  stroke-linejoin: round;
  vector-effect: non-scaling-stroke;
`;

const Ring = styled.ellipse`
  stroke: #050508;
  stroke-width: 3px;
  vector-effect: non-scaling-stroke;
`;

const Model = () => (
  <svg width={1186} height={420} viewBox="0 0 3000 1260" preserveAspectRatio="none" role="img" aria-label="Clamping assembly">
    <defs>
      <linearGradient id="rod" x1="0" y1="0" x2="0" y2="1">
        <stop offset="0" stopColor="#b4b3da" />
        <stop offset="0.3" stopColor="#c0bfe9" />
        <stop offset="0.6" stopColor="#a3a2c5" />
        <stop offset="1" stopColor="#66657a" />
      </linearGradient>
      <linearGradient id="rim" x1="0" y1="0" x2="1" y2="0.35">
        <stop offset="0" stopColor="#c0bfe9" />
        <stop offset="0.4" stopColor="#b6b5dc" />
        <stop offset="0.8" stopColor="#7c7b94" />
        <stop offset="1" stopColor="#666578" />
      </linearGradient>
      <linearGradient id="bore" x1="0" y1="0" x2="1" y2="0.4">
        <stop offset="0" stopColor="#66657a" />
        <stop offset="1" stopColor="#c8c7f0" />
      </linearGradient>
    </defs>

    {/* screw and rear jaw */}
    <g transform="translate(1441 0)">
      <Shape d="M300 700h336v52H300z" fill={TOP} />
      <Shape d="M275 380L299 303V745H275z" fill={SIDE_FACE} />
      <path d="M286 510H636V698H286z" fill="url(#rod)" />
      <Shape d="M420 509H286V696L400 697 404 701H636" fill="none" />
    </g>

    {/* base */}
    <Shape d="M645 943L707 769H1180V900H1540V952H645z" fill={TOP} />
    <Shape d="M1538 795L1556 745H2077V800H1538z" fill={TOP} />

    {/* back bracket */}
    <Shape d="M975 536h35V800L968 920z" fill={SLOPE} />
    <Shape d="M968 920L1010 800V728L972 822z" fill={SIDE_FACE} />
    <Shape d="M975 728h34" fill="none" />

    {/* wedge */}
    <Shape d="M1180 582L1212 500L1603 303L1583 377z" fill={SLOPE} />
    <Shape d="M1583 377L1603 303H1740L1716 380H1583z" fill={TOP} />
    <Shape d="M1180 582L1583 377L1716 380V745H1556L1538 795V903L1420 902 1416 898H1184z" fill={FACE} />

    {/* base front and upright */}
    <Shape
      d="M643 943L843 943 847 947H1280L1284 952H1538V795H1700L1704 799H2077V277H2252V1010H2300L2304 1014H2478V1171H2318L2314 1168H1882L1878 1164H1446L1442 1160H1004L1000 1155H647z"
      fill={FACE}
    />
    <Shape d="M2077 277L2137 101H2315L2252 277z" fill={TOP} />
    <Shape d="M2252 277L2315 101V838L2257 1010z" fill={SIDE_FACE} />
    <Shape d="M2257 1010L2318 838H2539L2478 1014H2300z" fill={TOP} />
    <Shape d="M2478 1014L2539 838V1010L2482 1171z" fill={SIDE_FACE} />
    <Ring cx={2420} cy={865} rx={33} ry={7} fill={TOP} />
    <Ring cx={2375} cy={987} rx={33} ry={7} fill={TOP} />
    <Shape d="M1322 923L1342 912H1426L1454 927L1418 937H1342z" fill="url(#bore)" />

    {/* screw and knob */}
    <g transform="translate(1441 0)">
      <Ring cx={848} cy={612} rx={10} ry={92} fill={SLOPE} />
      <path d="M860 516H1320V706H860z" fill="url(#rod)" />
      <Shape d="M860 516V706H1268L1272 710H1318M995 517H1295" fill="none" />
      <Shape d="M1406 780c10 28 50 28 70 0z" fill={FACE} />
      <path d="M1318 480L1346 447H1476V780H1346L1318 748z" fill="url(#rod)" />
      <Shape d="M1346 447L1318 490V748L1346 780H1476" fill="none" />
      <Shape d="M1341 470V775" fill="none" />
      <Shape d="M1476 447L1506 480V745L1474 780 1467 765V490z" fill="#84839c" />
      <Shape d="M1502 495L1493 560V690L1502 745" fill="none" />
      <path d="M1376 540h46l6 45-14 18h-20l-16-20z" fill="#7d7c95" />
      <Shape d="M1374 568l14 32 26 2 14-22-8-44" fill="none" />
      <Shape d="M1340 500c10 55 80 55 92 0" fill={FACE} />
      <Ring cx={1386} cy={483} rx={45} ry={50} fill={SLOPE} />
    </g>

    {/* roller */}
    <Shape d="M1135 216C1170 110 1230 82 1285 82C1390 88 1445 190 1443 285C1442 330 1430 370 1415 400z" fill="url(#rim)" />
    <Shape d="M1135 216C1150 150 1215 136 1270 136C1360 136 1425 220 1425 325C1420 440 1350 512 1280 512C1240 512 1212 505 1200 490z" fill={FACE} />

    {/* lever */}
    <Shape d="M840 212l35-16 65 2-20 12z" fill={SIDE_FACE} />
    <Shape d="M193 357L1165 147L1135 216L1315 178L1318 200L160 453z" fill={SLOPE} />
    <Shape d="M1053 237L1070 185L1148 168L1132 218z" fill={FACE} />
    <Shape d="M1053 237L1070 190V232z" fill={SIDE_FACE} />
    <Shape d="M193 357L85 545L52 638L160 453z" fill={SLOPE} />
    <Shape
      d="M160 453L1318 200L1350 220L1384 410L1360 456L450 658C410 665 350 700 335 750L310 800C290 850 240 872 192 870C130 860 85 820 75 770C62 730 56 690 52 638z"
      fill={FACE}
    />
    <Shape d="M1053 237L1315 178L1354 202L1386 400M1315 178L1322 200L1350 220" fill="none" />
    <Ring cx={1258} cy={344} rx={28} ry={31} fill={FACE} />
    <ellipse cx={1261} cy={335} rx={22} ry={20} fill="url(#bore)" />
    <Shape d="M1236 340c12 20 36 20 48 6" fill="none" />

    {/* front bracket */}
    <Shape d="M810 312L850 303C920 300 955 340 970 410V460L940 380z" fill={TOP} />
    <Shape d="M740 918L745 915V860L741 855V440C742 360 800 316 850 316C910 316 964 360 966 440V920H784L780 917z" fill={FACE} />
    <Shape d="M971 430V820" fill="none" />
    <Ring cx={855} cy={447} rx={36} ry={43} fill={FACE} />
    <Ring cx={857} cy={440} rx={33} ry={35} fill="url(#bore)" />
  </svg>
);

const Compass = () => (
  <svg width={240} height={220} viewBox="0 0 720 660" role="img" aria-label="Compass">
    <path
      d="M108 268Q155 210 235 208C345 205 450 290 450 410C450 470 430 510 398 545H113V425L108 420z"
      fill="#1a4763"
      stroke="#d9c9fb"
      strokeWidth={8}
    />
    <path d="M234 176V440M226 210L220 290 216 480M238 440L400 441 500 446C480 466 420 474 315 484L218 487M240 430L214 490" fill="none" stroke="#d9c9fb" strokeWidth={8} />
    <path d="M230 200V285" stroke="#d9c9fb" strokeWidth={14} />
    <circle cx={213} cy={497} r={16} fill="#d9c9fb" />
    <rect x={229} y={388} width={40} height={40} fill="#dd1a14" />
    <g fill="#f4ec20" fontFamily="Noto Sans, sans-serif" fontSize={60}>
      <text x={302} y={126}>y</text>
      <text x={553} y={382}>x</text>
      <text x={267} y={444}>z</text>
    </g>
  </svg>
);

const Axis = () => (
  <svg width={80} height={102} viewBox="0 -12 80 102" role="img" aria-label="Axis system">
    <path d="M13 17V61H60" fill="none" stroke="#f2f2fa" strokeWidth={2} />
    <g fill="#f2f2fa" fontFamily="Noto Sans, sans-serif" fontSize={20}>
      <text x={12} y={18}>y</text>
      <text x={57} y={62}>x</text>
      <text x={9} y={68}>z</text>
    </g>
  </svg>
);

const BrandMark = () => (
  <svg width={64} height={50} viewBox="0 0 64 50" role="img" aria-label="CATIA">
    <path d="M15 2h10c5 0 2 7-7 13" fill="none" stroke="#e0301c" strokeWidth={2.6} />
    <path d="M38 14c-8-2-13 1-11 6 1 4 9 5 8 9-1 4-9 3-15 2" fill="none" stroke="#f08a28" strokeWidth={3} />
    <path d="M9 19c9-3 15 0 13 5-3 7-11 10-18 11l5-13" fill="none" stroke="#45457c" strokeWidth={3} />
    <text x={11} y={46} fill="#45457c" fontFamily="Open Sans, sans-serif" fontStyle="italic" fontWeight={800} fontSize={16}>CATIA</text>
  </svg>
);

const StatusGlyph = ({ round }: { round?: boolean }) => (
  <svg width={24} height={22} viewBox="0 0 24 22" aria-hidden="true">
    <path d="M1 20h22V2" fill="none" stroke="#a39f9c" strokeWidth={3} />
    {round ? (
      <path d="M12 2a7 7 0 1 0 .1 0M12 6v7M9 13h6M5 17h3M15 17h3" fill="none" stroke="#a39f9c" strokeWidth={2} />
    ) : (
      <path d="M4 4h9v8H4zM16 14h2" fill="none" stroke="#a39f9c" strokeWidth={2.6} />
    )}
  </svg>
);

/* ---------- app ---------- */

export default function App() {
  return (
    <>
      <GlobalStyle />
      <Window>
        <TitleBar>
          <AppIcon size={21} />
          <Title>CATIA V5 - [clamping.CATProduct]</Title>
          <FrameButtons>
            <FrameButton aria-label="Minimize">
              <svg width={16} height={16}><path d="M0 8h15" stroke="#111" strokeWidth={1.3} /></svg>
            </FrameButton>
            <FrameButton aria-label="Restore">
              <svg width={16} height={16} fill="none" stroke="#111" strokeWidth={1.4}>
                <rect x={1} y={4} width={11} height={11} rx={2} />
                <path d="M4 1h8q3 0 3 3v8" />
              </svg>
            </FrameButton>
            <FrameButton aria-label="Close">
              <svg width={16} height={16}><path d="M1 1l14 14M15 1L1 15" stroke="#111" strokeWidth={1.4} /></svg>
            </FrameButton>
          </FrameButtons>
        </TitleBar>

        <MenuBar>
          <MenuIcon><AppIcon size={26} /></MenuIcon>
          <MenuItem $kind="start">Start</MenuItem>
          <MenuItem $kind="wide">ENOVIA V5 VPM</MenuItem>
          {MENUS.map(m => <MenuItem key={m}>{m}</MenuItem>)}
          <Spacer />
          <DocButtons>
            <DocButton aria-label="Minimize document">
              <svg width={14} height={14}><path d="M3 11h9" stroke="#8a8ab0" strokeWidth={3} /></svg>
            </DocButton>
            <DocButton aria-label="Restore document">
              <svg width={14} height={14} fill="none" stroke="#8a8ab0" strokeWidth={2}>
                <path d="M4 3h9v5h-3M4 2v3" /><path d="M1 7h8v5H1z" />
              </svg>
            </DocButton>
            <DocButton aria-label="Close document">
              <svg width={14} height={14}><path d="M2 2l9 9M11 2l-9 9" stroke="#8a8ab0" strokeWidth={3} /></svg>
            </DocButton>
          </DocButtons>
        </MenuBar>

        <Workspace>
          <Viewport>
            <Tree>
              <TreeRow $root>
                <RootIcon />
                <RootLabel>Assem19</RootLabel>
              </TreeRow>
              {PARTS.map(p => (
                <TreeRow key={p}>
                  <Branch />
                  <PartIcon />
                  <TreeLabel>{p}</TreeLabel>
                </TreeRow>
              ))}
              <TreeRow>
                <Branch last />
                <TreeLabel>Applications</TreeLabel>
              </TreeRow>
            </Tree>
            <ModelView><Model /></ModelView>
            <CompassView><Compass /></CompassView>
            <AxisView><Axis /></AxisView>
          </Viewport>

          <Strip>
            {SIDE.map((group, i) => (
              <StripGroup key={i} $single={group.length === 1}>
                <StripRule />
                {group.map(t => (
                  <StripTool key={t.icon} aria-label={t.label} disabled={t.off} $off={t.off}>
                    <Icon name={t.icon} />
                    {t.drop && <DropArrow />}
                  </StripTool>
                ))}
              </StripGroup>
            ))}
            <StripRule $long />
            <CaptureRow>
              <Check type="checkbox" disabled />
              Create Filter Capture
            </CaptureRow>
          </Strip>
        </Workspace>

        <BottomBar>
          {BAR.map((group, i) => (
            <BarGroup key={i}>
              <Grip />
              <BarTools>
                {group.map(t => (
                  <ToolButton
                    key={t.icon}
                    aria-label={t.label}
                    disabled={t.off}
                    $off={t.off}
                    $width={t.narrow ? 33 : t.drop ? 45 : 42}
                  >
                    <Icon name={t.icon} />
                    {t.drop && <DropArrow $lit={t.lit} />}
                  </ToolButton>
                ))}
              </BarTools>
            </BarGroup>
          ))}
          <Spacer />
          <Brand><BrandMark /></Brand>
        </BottomBar>

        <StatusBar>
          <Message>Select an object or a command</Message>
          <CommandInput aria-label="Power input" />
          <StatusButton aria-label="Dialog box"><StatusGlyph /></StatusButton>
          <StatusButton aria-label="Information"><StatusGlyph round /></StatusButton>
        </StatusBar>

        <Watermark aria-hidden="true">
          <MarkArabic lang="ar" dir="rtl">مستقل</MarkArabic>
          <MarkLatin>mostaql.com</MarkLatin>
        </Watermark>
      </Window>
    </>
  );
}
